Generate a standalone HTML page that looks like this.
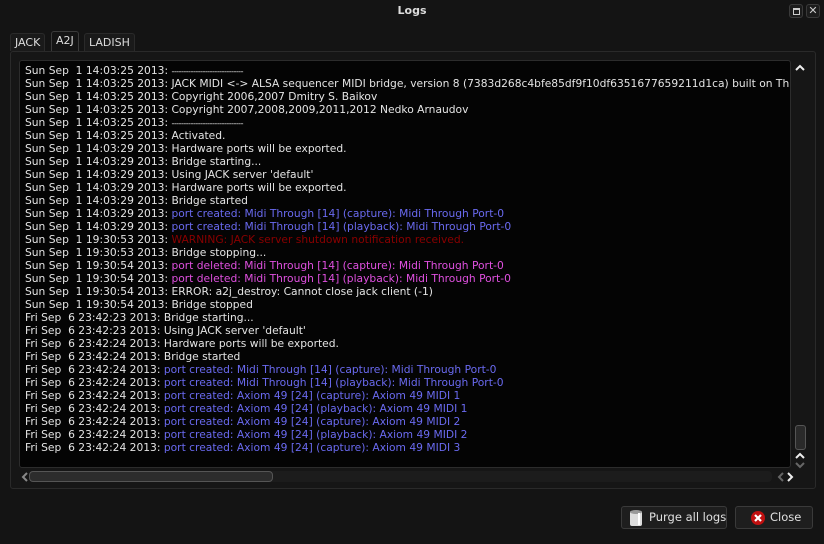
<!DOCTYPE html>
<html><head><meta charset="utf-8"><style>
*{margin:0;padding:0;box-sizing:border-box}
body{width:824px;height:544px;background:#141414;font-family:"DejaVu Sans",sans-serif;font-size:10.7px;color:#e4e4e4;position:relative;overflow:hidden}
.title{position:absolute;top:0;left:0;width:824px;height:22px;text-align:center;font-weight:bold;font-size:11px;line-height:22px;color:#ddd}
.tbtn{position:absolute;top:4px;width:14px;height:14px;border:1px solid #3a3a3a;border-radius:3px;background:#1c1c1c}
.tab{position:absolute;top:33px;height:18px;line-height:18px;padding:0 4px;color:#ddd;border:1px solid #2a2a2a;border-bottom:none;border-radius:3px 3px 0 0;background:#1a1a1a;font-size:11px}
.pane{position:absolute;left:10px;top:51px;width:806px;height:438px;border:1px solid #2a2a2a;border-radius:3px;background:#161616}
.log{position:absolute;left:19px;top:60px;width:772px;height:408px;background:#040404;border:1px solid #2c2c2c;border-radius:3px;overflow:hidden}
.log div{position:absolute;left:5px;white-space:pre;line-height:13px;height:13px}
.b{color:#6a6af0}.m{color:#e050e0}.r{color:#8a0000}
.btn{position:absolute;top:506px;height:23px;border:1px solid #3a3a3a;border-radius:3px;background:#1e1e1e;color:#e0e0e0;font-size:11.5px;line-height:21px;white-space:nowrap}
</style></head><body>
<div class="title">Logs</div>
<div class="tbtn" style="left:789px"><div style="position:absolute;left:3px;top:3px;width:7px;height:7px;border:1px solid #ccc;border-top-width:2px"></div></div>
<div class="tbtn" style="left:806px;color:#ccc;font-size:11px;line-height:12px;text-align:center;font-weight:bold">✕</div>
<div class="pane"></div>
<div class="tab" style="left:10px">JACK</div>
<div class="tab" style="left:51px;top:31px;height:20px;background:#141414;border-color:#3a3a3a">A2J</div>
<div class="tab" style="left:84px">LADISH</div>
<div class="log">
<div style="top:3px">Sun Sep  1 14:03:25 2013: <span style="font-size:8px;letter-spacing:-0.5px">------------------------------</span></div>
<div style="top:16px">Sun Sep  1 14:03:25 2013: JACK MIDI &lt;-&gt; ALSA sequencer MIDI bridge, version 8 (7383d268c4bfe85df9f10df6351677659211d1ca) built on Thu</div>
<div style="top:29px">Sun Sep  1 14:03:25 2013: Copyright 2006,2007 Dmitry S. Baikov</div>
<div style="top:42px">Sun Sep  1 14:03:25 2013: Copyright 2007,2008,2009,2011,2012 Nedko Arnaudov</div>
<div style="top:55px">Sun Sep  1 14:03:25 2013: <span style="font-size:8px;letter-spacing:-0.5px">------------------------------</span></div>
<div style="top:68px">Sun Sep  1 14:03:25 2013: Activated.</div>
<div style="top:81px">Sun Sep  1 14:03:29 2013: Hardware ports will be exported.</div>
<div style="top:94px">Sun Sep  1 14:03:29 2013: Bridge starting...</div>
<div style="top:107px">Sun Sep  1 14:03:29 2013: Using JACK server 'default'</div>
<div style="top:120px">Sun Sep  1 14:03:29 2013: Hardware ports will be exported.</div>
<div style="top:133px">Sun Sep  1 14:03:29 2013: Bridge started</div>
<div style="top:146px">Sun Sep  1 14:03:29 2013: <span class="b">port created: Midi Through [14] (capture): Midi Through Port-0</span></div>
<div style="top:159px">Sun Sep  1 14:03:29 2013: <span class="b">port created: Midi Through [14] (playback): Midi Through Port-0</span></div>
<div style="top:172px">Sun Sep  1 19:30:53 2013: <span class="r">WARNING: JACK server shutdown notification received.</span></div>
<div style="top:185px">Sun Sep  1 19:30:53 2013: Bridge stopping...</div>
<div style="top:198px">Sun Sep  1 19:30:54 2013: <span class="m">port deleted: Midi Through [14] (capture): Midi Through Port-0</span></div>
<div style="top:211px">Sun Sep  1 19:30:54 2013: <span class="m">port deleted: Midi Through [14] (playback): Midi Through Port-0</span></div>
<div style="top:224px">Sun Sep  1 19:30:54 2013: ERROR: a2j_destroy: Cannot close jack client (-1)</div>
<div style="top:237px">Sun Sep  1 19:30:54 2013: Bridge stopped</div>
<div style="top:250px">Fri Sep  6 23:42:23 2013: Bridge starting...</div>
<div style="top:263px">Fri Sep  6 23:42:23 2013: Using JACK server 'default'</div>
<div style="top:276px">Fri Sep  6 23:42:24 2013: Hardware ports will be exported.</div>
<div style="top:289px">Fri Sep  6 23:42:24 2013: Bridge started</div>
<div style="top:302px">Fri Sep  6 23:42:24 2013: <span class="b">port created: Midi Through [14] (capture): Midi Through Port-0</span></div>
<div style="top:315px">Fri Sep  6 23:42:24 2013: <span class="b">port created: Midi Through [14] (playback): Midi Through Port-0</span></div>
<div style="top:328px">Fri Sep  6 23:42:24 2013: <span class="b">port created: Axiom 49 [24] (capture): Axiom 49 MIDI 1</span></div>
<div style="top:341px">Fri Sep  6 23:42:24 2013: <span class="b">port created: Axiom 49 [24] (playback): Axiom 49 MIDI 1</span></div>
<div style="top:354px">Fri Sep  6 23:42:24 2013: <span class="b">port created: Axiom 49 [24] (capture): Axiom 49 MIDI 2</span></div>
<div style="top:367px">Fri Sep  6 23:42:24 2013: <span class="b">port created: Axiom 49 [24] (playback): Axiom 49 MIDI 2</span></div>
<div style="top:380px">Fri Sep  6 23:42:24 2013: <span class="b">port created: Axiom 49 [24] (capture): Axiom 49 MIDI 3</span></div>
</div>
<!-- vertical scrollbar -->
<svg style="position:absolute;left:795px;top:64px" width="10" height="8"><path d="M1 6L5 2L9 6" stroke="#eee" stroke-width="2" fill="none"/></svg>
<div style="position:absolute;left:795px;top:425px;width:11px;height:25px;border:1px solid #555;border-radius:3px;background:#2a2a2a"></div>
<svg style="position:absolute;left:795px;top:452px" width="10" height="8"><path d="M1 6L5 2L9 6" stroke="#eee" stroke-width="2" fill="none"/></svg>
<svg style="position:absolute;left:795px;top:461px" width="10" height="8"><path d="M1 2L5 6L9 2" stroke="#666" stroke-width="2" fill="none"/></svg>
<!-- horizontal scrollbar -->
<svg style="position:absolute;left:21px;top:472px" width="8" height="10"><path d="M6 1L2 5L6 9" stroke="#888" stroke-width="2" fill="none"/></svg>
<div style="position:absolute;left:29px;top:471px;width:743px;height:11px;border-radius:4px;background:#1c1c1c"></div>
<div style="position:absolute;left:29px;top:471px;width:244px;height:11px;border:1px solid #555;border-radius:4px;background:#2c2c2c"></div>
<svg style="position:absolute;left:777px;top:472px" width="8" height="10"><path d="M6 1L2 5L6 9" stroke="#666" stroke-width="2" fill="none"/></svg>
<svg style="position:absolute;left:786px;top:472px" width="8" height="10"><path d="M2 1L6 5L2 9" stroke="#eee" stroke-width="2" fill="none"/></svg>
<div class="btn" style="left:621px;width:106px">
<svg width="16" height="18" style="position:absolute;left:6px;top:2px" viewBox="0 0 16 18"><rect x="2" y="2" width="12" height="15" rx="2" fill="#ddd"/><ellipse cx="8" cy="3" rx="6" ry="2" fill="#999"/><rect x="10" y="4" width="2" height="12" fill="#fff"/></svg>
<span style="position:absolute;left:27px">Purge all logs</span></div>
<div class="btn" style="left:735px;width:78px">
<svg width="16" height="16" style="position:absolute;left:14px;top:3px" viewBox="0 0 16 16"><circle cx="8" cy="8" r="7" fill="#c01010"/><path d="M5 5L11 11M11 5L5 11" stroke="#fff" stroke-width="2.2"/></svg>
<span style="position:absolute;left:34px">Close</span></div>
</body></html>
